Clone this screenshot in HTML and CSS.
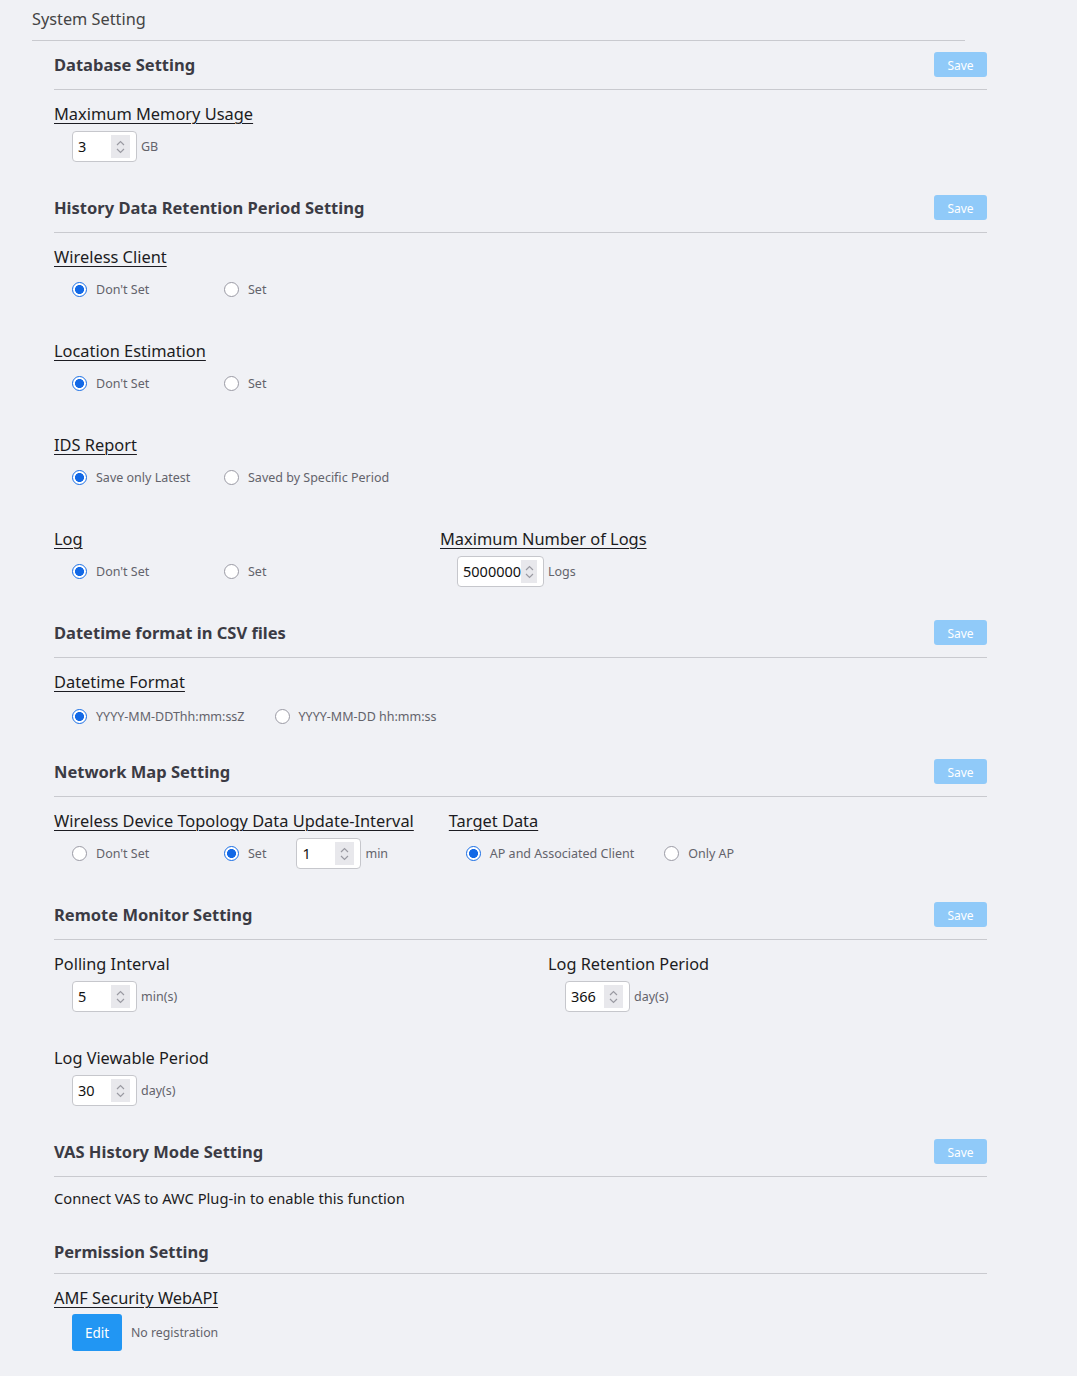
FILE: index.html
```html
<!DOCTYPE html>
<html>
<head>
<meta charset="utf-8">
<link rel="stylesheet" href="styles.css">
</head>
<body>
<div class="page">
  <div class="title">System Setting</div>

  <section class="sec">
    <div class="head"><h2>Database Setting</h2><button class="save">Save</button></div>
    <div class="body">
      <div class="field">
        <div class="lbl u">Maximum Memory Usage</div>
        <div class="row">
          <div class="num"><span class="val">3</span><span class="spin"><svg width="11" height="18" viewBox="0 0 11 18"><path d="M2 7 L5.5 3.5 L9 7 M2 11 L5.5 14.5 L9 11" fill="none" stroke="#9a9aa2" stroke-width="1.2"/></svg></span></div>
          <span class="unit">GB</span>
        </div>
      </div>
    </div>
  </section>

  <section class="sec">
    <div class="head"><h2>History Data Retention Period Setting</h2><button class="save">Save</button></div>
    <div class="body">
      <div class="field">
        <div class="lbl u">Wireless Client</div>
        <div class="row">
          <span class="opt"><span class="radio on"></span><span class="otext">Don't Set</span></span>
          <span class="opt"><span class="radio"></span><span class="otext">Set</span></span>
        </div>
      </div>
      <div class="field">
        <div class="lbl u">Location Estimation</div>
        <div class="row">
          <span class="opt"><span class="radio on"></span><span class="otext">Don't Set</span></span>
          <span class="opt"><span class="radio"></span><span class="otext">Set</span></span>
        </div>
      </div>
      <div class="field">
        <div class="lbl u">IDS Report</div>
        <div class="row">
          <span class="opt"><span class="radio on"></span><span class="otext">Save only Latest</span></span>
          <span class="opt"><span class="radio"></span><span class="otext">Saved by Specific Period</span></span>
        </div>
      </div>
      <div class="cols">
        <div class="field col-log">
          <div class="lbl u">Log</div>
          <div class="row">
            <span class="opt"><span class="radio on"></span><span class="otext">Don't Set</span></span>
            <span class="opt"><span class="radio"></span><span class="otext">Set</span></span>
          </div>
        </div>
        <div class="field">
          <div class="lbl u">Maximum Number of Logs</div>
          <div class="row r17">
            <div class="num wide"><span class="val">5000000</span><span class="spin narrow"><svg width="11" height="18" viewBox="0 0 11 18"><path d="M2 7 L5.5 3.5 L9 7 M2 11 L5.5 14.5 L9 11" fill="none" stroke="#9a9aa2" stroke-width="1.2"/></svg></span></div>
            <span class="unit">Logs</span>
          </div>
        </div>
      </div>
    </div>
  </section>

  <section class="sec">
    <div class="head"><h2>Datetime format in CSV files</h2><button class="save">Save</button></div>
    <div class="body short">
      <div class="field">
        <div class="lbl u">Datetime Format</div>
        <div class="row dt">
          <span class="opt"><span class="radio on"></span><span class="otext">YYYY-MM-DDThh:mm:ssZ</span></span>
          <span class="opt"><span class="radio"></span><span class="otext">YYYY-MM-DD hh:mm:ss</span></span>
        </div>
      </div>
    </div>
  </section>

  <section class="sec">
    <div class="head"><h2>Network Map Setting</h2><button class="save">Save</button></div>
    <div class="body">
      <div class="cols">
        <div class="field col-net">
          <div class="lbl u">Wireless Device Topology Data Update-Interval</div>
          <div class="row">
            <span class="opt"><span class="radio"></span><span class="otext">Don't Set</span></span>
            <span class="opt"><span class="radio on"></span><span class="otext free">Set</span></span>
            <div class="num"><span class="val">1</span><span class="spin"><svg width="11" height="18" viewBox="0 0 11 18"><path d="M2 7 L5.5 3.5 L9 7 M2 11 L5.5 14.5 L9 11" fill="none" stroke="#9a9aa2" stroke-width="1.2"/></svg></span></div>
            <span class="unit">min</span>
          </div>
        </div>
        <div class="field">
          <div class="lbl u">Target Data</div>
          <div class="row r17">
            <span class="opt"><span class="radio on"></span><span class="otext">AP and Associated Client</span></span>
            <span class="opt"><span class="radio"></span><span class="otext">Only AP</span></span>
          </div>
        </div>
      </div>
    </div>
  </section>

  <section class="sec">
    <div class="head"><h2>Remote Monitor Setting</h2><button class="save">Save</button></div>
    <div class="body">
      <div class="cols">
        <div class="field col-rm">
          <div class="lbl">Polling Interval</div>
          <div class="row">
            <div class="num"><span class="val">5</span><span class="spin"><svg width="11" height="18" viewBox="0 0 11 18"><path d="M2 7 L5.5 3.5 L9 7 M2 11 L5.5 14.5 L9 11" fill="none" stroke="#9a9aa2" stroke-width="1.2"/></svg></span></div>
            <span class="unit">min(s)</span>
          </div>
        </div>
        <div class="field">
          <div class="lbl">Log Retention Period</div>
          <div class="row r17">
            <div class="num"><span class="val">366</span><span class="spin"><svg width="11" height="18" viewBox="0 0 11 18"><path d="M2 7 L5.5 3.5 L9 7 M2 11 L5.5 14.5 L9 11" fill="none" stroke="#9a9aa2" stroke-width="1.2"/></svg></span></div>
            <span class="unit">day(s)</span>
          </div>
        </div>
      </div>
      <div class="field">
        <div class="lbl">Log Viewable Period</div>
        <div class="row">
          <div class="num"><span class="val">30</span><span class="spin"><svg width="11" height="18" viewBox="0 0 11 18"><path d="M2 7 L5.5 3.5 L9 7 M2 11 L5.5 14.5 L9 11" fill="none" stroke="#9a9aa2" stroke-width="1.2"/></svg></span></div>
          <span class="unit">day(s)</span>
        </div>
      </div>
    </div>
  </section>

  <section class="sec">
    <div class="head"><h2>VAS History Mode Setting</h2><button class="save">Save</button></div>
    <div class="body vas">
      <p class="note">Connect VAS to AWC Plug-in to enable this function</p>
    </div>
  </section>

  <section class="sec">
    <div class="head plain"><h2>Permission Setting</h2></div>
    <div class="body">
      <div class="field">
        <div class="lbl u">AMF Security WebAPI</div>
        <div class="row edit-row">
          <button class="edit">Edit</button>
          <span class="noreg">No registration</span>
        </div>
      </div>
    </div>
  </section>
</div>
</body>
</html>
```

FILE: styles.css
```css
* { box-sizing: border-box; }
html, body { margin: 0; padding: 0; }
body {
  background: #f0f1f5;
  font-family: "Noto Sans", "Open Sans", sans-serif;
  color: #222;
}
.page { padding-left: 32px; width: 1077px; min-height: 1376px; }
.title {
  width: 933px;
  height: 41px;
  padding-top: 7px;
  font-size: 16.3px;
  line-height: 24px;
  color: #444;
  border-bottom: 1px solid #c9cacf;
}
.sec { margin-left: 22px; width: 933px; }
.head {
  display: flex;
  align-items: center;
  justify-content: space-between;
  min-height: 49px;
  padding: 11px 0 12px;
  border-bottom: 1px solid #c9cacf;
}
.head.plain { padding: 30px 0 9px; min-height: 0; }
.head h2 {
  margin: 0;
  font-size: 16.5px;
  line-height: 24px;
  font-weight: 700;
  color: #3b3b44;
}
.save {
  width: 53px;
  height: 25px;
  border: none;
  border-radius: 3px;
  background: #90caf9;
  color: #fff;
  font-family: "Noto Sans", sans-serif;
  font-size: 12px;
  padding: 0;
  padding-top: 2px;
}
.body {
  padding: 12px 0 22px;
  display: flex;
  flex-direction: column;
  gap: 34px;
}
.body.short { padding-bottom: 16px; }
.body.vas { padding: 9px 0 0; }
.field { display: flex; flex-direction: column; }
.lbl {
  font-size: 16.3px;
  line-height: 24px;
  color: #1c1c22;
  white-space: nowrap;
}
.lbl.u {
  font-size: 16.4px;
  text-decoration: underline;
  text-underline-offset: 3px;
  text-decoration-thickness: 1px;
}
.row {
  margin-top: 5px;
  height: 31px;
  display: flex;
  align-items: center;
  padding-left: 18px;
}
.row.r17 { padding-left: 17px; }
.row.dt { margin-top: 7px; }
.cols { display: flex; }
.col-log { width: 386px; }
.col-net { margin-right: 35px; }
.col-rm { width: 494px; }
.opt { display: inline-flex; align-items: center; margin-right: 30px; }
.opt .otext {
  min-width: 98px;
  font-size: 12.5px;
  color: #63636b;
  white-space: nowrap;
}
.opt:last-child .otext, .opt .otext.free { min-width: 0; }
.radio {
  width: 15px;
  height: 15px;
  border-radius: 50%;
  border: 1px solid #9a9aa4;
  background: #fff;
  margin-right: 9px;
  flex: none;
}
.radio.on {
  border-color: #1a6fe6;
  background: radial-gradient(circle, #1369e6 0 4.2px, #fff 4.8px);
}
.num {
  width: 65px;
  height: 31px;
  border: 1px solid #c6c7cc;
  border-radius: 4px;
  background: #fff;
  display: flex;
  align-items: center;
  padding-left: 5px;
  padding-right: 6px;
  justify-content: space-between;
}
.num.wide { width: 87px; padding-right: 6px; }
.val { font-size: 14.5px; color: #111; position: relative; top: -1px; }
.spin {
  width: 19px;
  height: 23px;
  background: #e8e8ec;
  display: flex;
  align-items: center;
  justify-content: center;
}
.spin.narrow { width: 16px; }
.unit {
  margin-left: 4px;
  font-size: 12.5px;
  color: #63636b;
}
.note {
  margin: 0;
  font-size: 14.7px;
  line-height: 24px;
  color: #1c1c22;
}
.edit-row { height: 37px; margin-top: 4px; }
.edit {
  width: 50px;
  height: 37px;
  border: none;
  border-radius: 3px;
  background: #2196f3;
  color: #fff;
  font-family: "Noto Sans", sans-serif;
  font-size: 13.5px;
  padding: 0;
}
.noreg { margin-left: 9px; font-size: 12.3px; color: #63636b; }
```
